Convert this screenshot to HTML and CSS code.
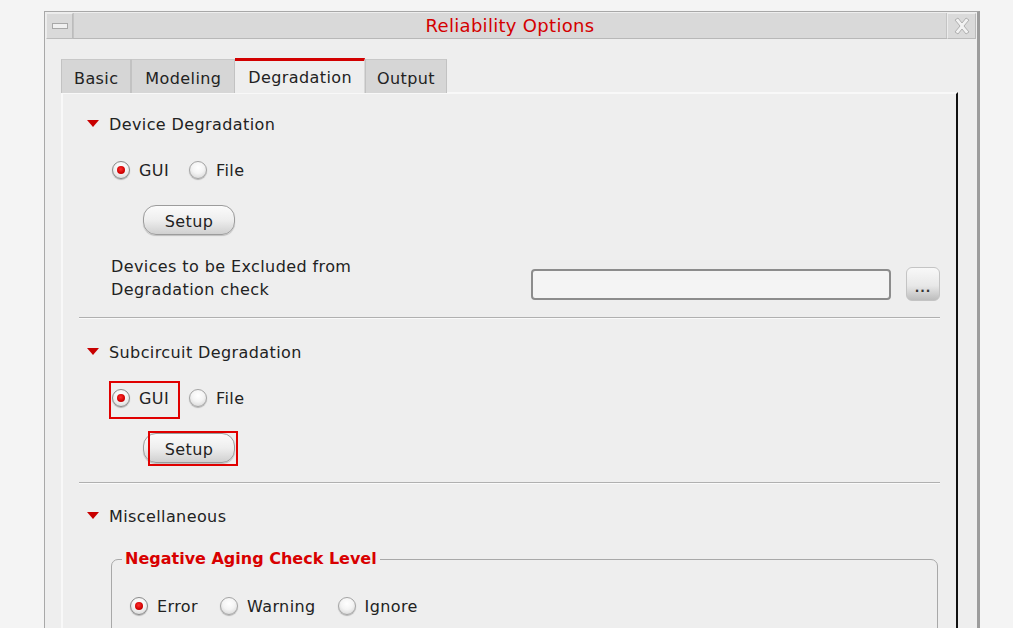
FILE: index.html
```html
<!DOCTYPE html>
<html>
<head>
<meta charset="utf-8">
<title>Reliability Options</title>
<link rel="stylesheet" href="styles.css">
</head>
<body>
<div class="page">
  <div class="window">
    <div class="titlebar">
      <div class="tb-btn tb-min"><span class="min-bar"></span></div>
      <div class="tb-title">Reliability Options</div>
      <div class="tb-btn tb-close">
        <svg width="18" height="18" viewBox="0 0 18 18">
          <path d="M2 3 L5 1 L9 6 L13 1 L16 3 L11 9 L16 15 L13 17 L9 12 L5 17 L2 15 L7 9 Z" fill="#f2f2f2" stroke="#b0b0b0" stroke-width="1"/>
        </svg>
      </div>
    </div>
    <div class="wbody">
      <div class="tabs">
        <div class="tab">Basic</div>
        <div class="tab">Modeling</div>
        <div class="tab active">Degradation</div>
        <div class="tab">Output</div>
      </div>
      <div class="panel">
        <div class="sec-head"><span class="tri"></span><span>Device Degradation</span></div>
        <div class="radio-row">
          <label class="radio"><span class="dot on"></span>GUI</label>
          <label class="radio"><span class="dot"></span>File</label>
        </div>
        <div class="setup-row"><button class="setup">Setup</button></div>
        <div class="exclude-row">
          <div class="ex-label">Devices to be Excluded from<br>Degradation check</div>
          <div class="ex-input"></div>
          <button class="browse">...</button>
        </div>
        <div class="sep"></div>

        <div class="sec-head sec2"><span class="tri"></span><span>Subcircuit Degradation</span></div>
        <div class="radio-row">
          <label class="radio hl-wrap"><span class="dot on"></span>GUI<span class="hl hl-gui"></span></label>
          <label class="radio"><span class="dot"></span>File</label>
        </div>
        <div class="setup-row"><span class="hl-wrap"><button class="setup">Setup</button><span class="hl hl-setup"></span></span></div>
        <div class="sep sep2"></div>

        <div class="sec-head sec3"><span class="tri"></span><span>Miscellaneous</span></div>
        <fieldset class="group">
          <legend>Negative Aging Check Level</legend>
          <div class="radio-row in-group">
            <label class="radio"><span class="dot on"></span>Error</label>
            <label class="radio"><span class="dot"></span>Warning</label>
            <label class="radio"><span class="dot"></span>Ignore</label>
          </div>
        </fieldset>
      </div>
    </div>
  </div>
</div>
</body>
</html>
```
FILE: styles.css
```css
html, body {
  margin: 0;
  padding: 0;
  background: #f4f4f4;
  overflow: hidden;
}
body {
  font-family: "DejaVu Sans", "Liberation Sans", sans-serif;
  color: #222;
  letter-spacing: 0.4px;
}
.page {
  padding: 11px 0 0 44px;
}
.window {
  box-sizing: border-box;
  width: 936px;
  height: 640px;
  border-top: 1px solid #a8a8a8;
  border-left: 1px solid #a8a8a8;
  border-right: 3px solid #9c9c9c;
  padding: 1px 1px 0 1px;
  background: #eeeeee;
}
.titlebar {
  display: flex;
  height: 26px;
  background: #d9d9d9;
  border-bottom: 1px solid #b8b8b8;
  box-sizing: border-box;
}
.tb-btn {
  box-sizing: border-box;
  height: 26px;
  display: flex;
  align-items: center;
  justify-content: center;
  background: #dadada;
  border: 1px solid #bcbcbc;
  border-top-color: #ececec;
  border-left-color: #ececec;
}
.tb-min {
  width: 27px;
}
.min-bar {
  display: block;
  width: 14px;
  height: 4px;
  background: #f0f0f0;
  border: 1px solid #a8a8a8;
}
.tb-close {
  width: 29px;
}
.tb-title {
  flex: 1;
  text-align: center;
  line-height: 25px;
  font-size: 18px;
  letter-spacing: 0.3px;
  color: #d40000;
  border-left: 1px solid #c4c4c4;
  border-right: 1px solid #c4c4c4;
}
.wbody {
  padding: 19px 0 0 15px;
}
.tabs {
  display: flex;
  height: 34px;
}
.tab {
  box-sizing: border-box;
  height: 34px;
  padding: 0 12px;
  line-height: 38px;
  font-size: 16px;
  background: #d6d6d6;
  border-left: 1px solid #c2c2c2;
  border-right: 1px solid #c2c2c2;
  border-top: 1px solid #c8c8c8;
  margin-top: 1px;
  color: #222;
}
.tab:nth-child(2) {
  padding: 0 13px;
}
.tab.active {
  background: #eeeeee;
  border-top: 3px solid #d20000;
  border-left: none;
  border-right: 1px solid #d8d8d8;
  margin-top: 0;
  height: 35px;
  line-height: 34px;
  padding: 0 12px 0 13px;
}
.tab:last-child {
  padding: 0 11px;
}
.panel {
  box-sizing: border-box;
  width: 897px;
  height: 560px;
  border-left: 2px solid #f8f8f8;
  border-top: 2px solid #f8f8f8;
  border-right: 2px solid #111;
  padding: 18px 16px 0 16px;
}
.sec-head {
  display: flex;
  align-items: center;
  height: 24px;
  padding-left: 8px;
  font-size: 16px;
}
.tri {
  display: inline-block;
  width: 0;
  height: 0;
  border-left: 6px solid transparent;
  border-right: 6px solid transparent;
  border-top: 7px solid #c80000;
  margin-right: 10px;
  margin-top: -2px;
}
.radio-row {
  display: flex;
  align-items: center;
  height: 24px;
  margin-top: 22px;
  padding-left: 33px;
  gap: 20px;
  font-size: 16px;
}
.radio {
  display: flex;
  align-items: center;
  gap: 9px;
}
.dot {
  box-sizing: border-box;
  width: 18px;
  height: 18px;
  border-radius: 50%;
  border: 1px solid #a4a4a4;
  background: radial-gradient(circle at 50% 35%, #ffffff 0%, #f4f4f4 45%, #cfcfcf 100%);
  box-shadow: 0 1px 1px rgba(0,0,0,0.25);
  display: flex;
  align-items: center;
  justify-content: center;
}
.dot.on {
  border-color: #8a8a8a;
}
.dot.on::after {
  content: "";
  width: 8px;
  height: 8px;
  border-radius: 50%;
  background: radial-gradient(circle at 45% 40%, #ff3030 0%, #d00000 60%, #a00000 100%);
}
.setup-row {
  margin-top: 23px;
  padding-left: 64px;
  height: 30px;
  display: flex;
}
.setup {
  box-sizing: border-box;
  width: 92px;
  height: 30px;
  border: 1px solid #9c9c9c;
  border-radius: 13px;
  background: linear-gradient(#fbfbfb 0%, #eeeeee 50%, #d0d0d0 100%);
  box-shadow: 0 1px 1px rgba(0,0,0,0.2);
  font-family: "DejaVu Sans", sans-serif;
  font-size: 16px;
  letter-spacing: 0.4px;
  color: #222;
  padding: 2px 0 0 0;
}
.exclude-row {
  display: flex;
  align-items: flex-start;
  margin-top: 20px;
  padding-left: 32px;
}
.ex-label {
  font-size: 16px;
  line-height: 23px;
}
.ex-input {
  box-sizing: border-box;
  margin-left: auto;
  margin-top: 14px;
  width: 360px;
  height: 31px;
  border: 2px solid #8c8c8c;
  border-radius: 4px;
  background: #f4f4f4;
}
.browse {
  box-sizing: border-box;
  margin-left: 15px;
  margin-top: 12px;
  width: 34px;
  height: 34px;
  border: 1px solid #c4c4c4;
  border-radius: 6px;
  background: linear-gradient(#f8f8f8 0%, #e8e8e8 55%, #bdbdbd 100%);
  font-family: "DejaVu Sans", sans-serif;
  font-size: 12px;
  font-weight: bold;
  color: #333;
  padding: 8px 0 0 0;
  letter-spacing: 1px;
}
.sep {
  margin-top: 16px;
  height: 1px;
  background: #b0b0b0;
  border-bottom: 1px solid #fafafa;
}
.sec2 {
  margin-top: 21px;
}
.sep2 {
  margin-top: 19px;
}
.sec3 {
  margin-top: 20px;
}
.hl-wrap {
  position: relative;
}
.hl {
  position: absolute;
  border: 2px solid #e00000;
  pointer-events: none;
}
.hl-gui {
  left: -3px;
  top: -8px;
  width: 67px;
  height: 34px;
}
.hl-setup {
  left: 5px;
  top: -2px;
  width: 86px;
  height: 31px;
}
.group {
  margin: 21px 2px 0 32px;
  padding: 0 0 20px 10px;
  border: 1px solid #a8a8a8;
  border-radius: 7px;
}
.group legend {
  padding: 0 3px;
  font-size: 16px;
  font-weight: bold;
  letter-spacing: 0;
  color: #d80000;
  line-height: 20px;
}
.radio-row.in-group {
  margin-top: 25px;
  padding-left: 8px;
  gap: 22px;
}
```
